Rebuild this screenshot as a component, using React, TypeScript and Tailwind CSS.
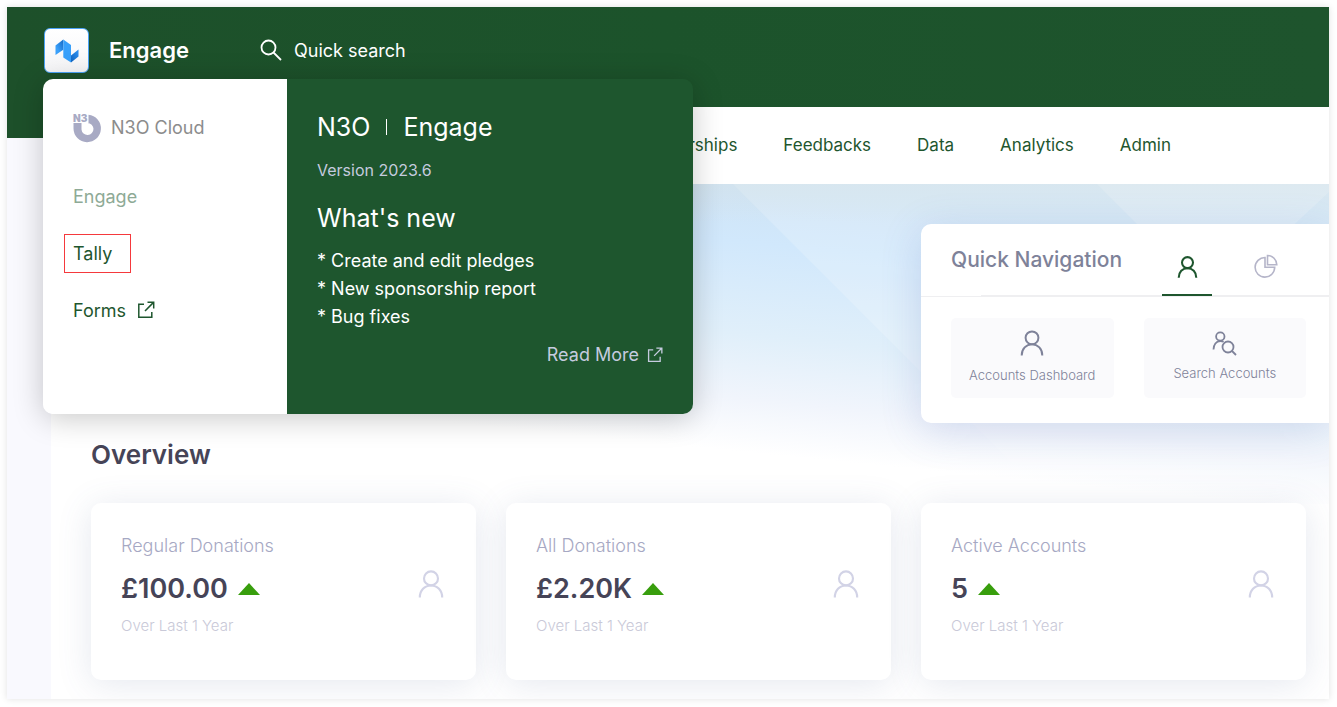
import React from "react";

function PersonIcon({ className, weight = 2 }: { className?: string; weight?: number }) {
  return (
    <svg viewBox="0 0 28 30" fill="none" stroke="currentColor" strokeWidth={weight} className={className} aria-hidden="true">
      <circle cx="14" cy="9" r="7.5" />
      <path d="M2 29.500C2 21.800 7.200 16.600 14 16.600s12 5.200 12 12.900" />
    </svg>
  );
}

function PersonSearchIcon({ className }: { className?: string }) {
  return (
    <svg viewBox="0 0 25 25" fill="none" stroke="currentColor" strokeWidth="1.800" className={className} aria-hidden="true">
      <circle cx="8.300" cy="5.500" r="4.200" />
      <path d="M1.500 18.500c0-4.500 2.700-8.500 6.800-8.500 1.400 0 2.400.3 3.200.9" />
      <circle cx="16" cy="16" r="5.500" />
      <path d="m20 20 4 4" />
    </svg>
  );
}

function PieIcon({ className }: { className?: string }) {
  return (
    <svg viewBox="0 0 24 24" fill="none" stroke="currentColor" strokeWidth="1.600" className={className} aria-hidden="true">
      <path d="M11 3.500A9.800 9.800 0 1 0 20.700 13.300H11z" />
      <path d="M13.500 1.500v9.300h9.300a9.300 9.300 0 0 0-9.300-9.300z" />
    </svg>
  );
}

function ExternalIcon({ className }: { className?: string }) {
  return (
    <svg viewBox="0 0 18 18" fill="none" stroke="currentColor" strokeWidth="1.500" className={className} aria-hidden="true">
      <path d="M7 3.200H1.800v13h13V11" />
      <path d="M10.500 1.200h6.200v6.200M16.500 1.400 8 10" />
    </svg>
  );
}

function EngageLogo() {
  return (
    <svg viewBox="0 0 24 24" className="size-6" aria-hidden="true">
      <defs>
        <linearGradient id="logo-left" x1="0" y1="1" x2="1" y2="0">
          <stop offset="0.300" stopColor="#3aa0fa" />
          <stop offset="1" stopColor="#1469c4" />
        </linearGradient>
        <linearGradient id="logo-right" x1="0" y1="1" x2="1" y2="0">
          <stop offset="0" stopColor="#0f62bd" />
          <stop offset="0.800" stopColor="#2b8cec" />
        </linearGradient>
      </defs>
      <path d="M.5 6.500 8.300.5v10.300L.5 16z" fill="url(#logo-left)" />
      <path d="m8.300.5 7.700 5.500v17.500L8.300 18.500z" fill="#38a0fb" />
      <path d="M16 16.500 23.500 10.500v7L16 23.500z" fill="url(#logo-right)" />
    </svg>
  );
}

function CloudLogo() {
  return (
    <svg viewBox="0 0 28 28" className="size-7 overflow-visible" aria-hidden="true">
      <path d="M.5 9H8.500V15.500a6 6 0 1 0 6-6.500H15.500V.8A13.700 13.700 0 1 1 .5 14.500z" fill="#a8aac4" />
      <text x="0" y="7.500" fontFamily="Inter, sans-serif" fontSize="10" fontWeight="900" fill="#a8aac4">N3</text>
    </svg>
  );
}

const navItems = ["Sponsorships", "Feedbacks", "Data", "Analytics", "Admin"];
const stats = [
  { label: "Regular Donations", value: "£100.00" },
  { label: "All Donations", value: "£2.20K" },
  { label: "Active Accounts", value: "5" },
];
const news = ["Create and edit pledges", "New sponsorship report", "Bug fixes"];

function AppMenu() {
  return (
    <div className="absolute -left-px top-[51px] z-20 flex w-[650px] overflow-hidden rounded-[10px] shadow-[0_4px_30px_rgba(0,0,0,0.22)]">
      <div className="w-[244px] bg-white pl-[30px] pt-[35px]">
        <div className="flex items-center gap-[10px] text-[18px] leading-7 text-[#8c8c8c]">
          <CloudLogo />
          N3O Cloud
        </div>
        <nav className="mt-[35px] flex flex-col items-start gap-[18px] text-[18px] text-[#1e562e]">
          <a href="#engage" className="flex h-[39px] items-center text-[#8eaa96]">Engage</a>
          <a href="#tally" className="-ml-[9px] flex h-[39px] w-[67px] items-center border border-[#f5393d] pl-2">Tally</a>
          <a href="#forms" className="flex h-[39px] items-center gap-[11px]">
            Forms
            <ExternalIcon className="mb-0.5 size-[18px]" />
          </a>
        </nav>
      </div>
      <div className="h-[335px] flex-1 bg-[#1e562e] px-[30px] pt-7 text-white">
        <h1 className="flex items-center text-[25px] leading-10">
          N3O
          <span className="mx-4 h-4 w-px bg-white" />
          Engage
        </h1>
        <p className="mt-[11px] text-base leading-6 text-[#c5cbdf]">Version 2023.6</p>
        <h2 className="mt-4 text-[25px] leading-10">What's new</h2>
        <ul className="mt-[9px] text-[18px] leading-7">
          {news.map((item) => (
            <li key={item}>* {item}</li>
          ))}
        </ul>
        <a href="#more" className="mt-[10px] flex items-center justify-end gap-2 text-[18px] leading-7 text-[#c5cbdf]">
          Read More
          <ExternalIcon className="size-4" />
        </a>
      </div>
    </div>
  );
}

function HeroBackdrop() {
  return (
    <svg viewBox="0 0 1278 320" preserveAspectRatio="none" className="absolute inset-x-0 top-0 h-80 w-full" aria-hidden="true">
      <defs>
        <linearGradient id="sky" gradientUnits="userSpaceOnUse" x1="640" y1="0" x2="614" y2="260">
          <stop offset="0" stopColor="#cfe4f5" />
          <stop offset="0.200" stopColor="#d1e8fc" />
          <stop offset="0.550" stopColor="#e0effa" />
          <stop offset="0.800" stopColor="#f1f5fc" />
          <stop offset="1" stopColor="#ffffff" />
        </linearGradient>
        <linearGradient id="top-shade" x1="0" y1="0" x2="0" y2="1">
          <stop offset="0" stopColor="#d8e0e0" stopOpacity="0.300" />
          <stop offset="0.120" stopColor="#d8e0e0" stopOpacity="0" />
        </linearGradient>
      </defs>
      <rect width="1278" height="320" fill="url(#sky)" />
      <path d="M682 0H1278V320H1002z" fill="#fff" fillOpacity="0.180" />
      <path d="M1046 0h232v8L1162 116z" fill="#fff" fillOpacity="0.200" />
      <rect width="1278" height="320" fill="url(#top-shade)" />
    </svg>
  );
}

function QuickNavigation() {
  return (
    <section className="relative col-start-3 -mr-[23px] h-[199px] rounded-l-[10px] bg-white shadow-[0_8px_40px_rgba(82,104,180,0.2)]">
      <div className="flex h-[73px] border-b border-[#efeff1] pl-[30px]">
        <h2 className="w-[30px] whitespace-nowrap pt-[21px] text-[21px] font-medium leading-[30px] text-[#7e8299]">Quick Navigation</h2>
        <div role="tablist" className="flex flex-1 gap-[30px] border-b border-[#efeff1] pl-[166px]">
          <button role="tab" aria-selected="true" aria-label="Accounts" className="flex h-[72px] w-[80px] justify-center">
            <span className="flex h-[72px] w-[50px] items-center justify-center border-b-2 border-[#1e562e] pt-4 text-[#1e562e]">
              <PersonIcon className="h-[22px] w-[21px]" weight={2.800} />
            </span>
          </button>
          <button role="tab" aria-selected="false" aria-label="Reports" className="-ml-4 flex h-[71px] w-[50px] items-center justify-center pt-[13px] text-[#b5b5c9]">
            <PieIcon className="size-6" />
          </button>
        </div>
      </div>
      <div className="grid grid-cols-2 gap-[30px] pl-[30px] pr-[23px] pt-[21px] text-[13px] font-light text-[#7e8299]">
        <a href="#dashboard" className="flex h-20 flex-col items-center gap-[9px] rounded-[5px] bg-[#fafafc] pt-3">
          <PersonIcon className="h-[26px] w-6" weight={2.300} />
          <span className="leading-5">Accounts Dashboard</span>
        </a>
        <a href="#search-accounts" className="flex h-20 flex-col items-center gap-[7px] rounded-[5px] bg-[#fafafc] pt-[13px]">
          <PersonSearchIcon className="size-[25px]" />
          <span className="leading-5">Search Accounts</span>
        </a>
      </div>
    </section>
  );
}

export default function App() {
  return (
    <div className="min-h-screen bg-white p-[7px] pb-2 pr-2 font-['Inter','Noto_Sans',sans-serif]">
      <div className="overflow-hidden bg-white shadow-[0_0_7px_rgba(0,0,0,0.12)]">
        <header className="flex h-[100px] bg-gradient-to-r from-[#1d502a] via-[#1c532b] to-[#1e542d] pl-[37px] pt-[21px] text-white">
          <div className="relative flex h-[45px] w-[216px] items-center">
            <button aria-label="Open app menu" aria-expanded="true" className="flex size-[45px] items-center justify-center rounded-[6px] border border-[#4ba3f7] bg-gradient-to-b from-white to-[#f5f5f7]">
              <EngageLogo />
            </button>
            <span className="ml-5 pb-0.5 text-[22px] font-semibold leading-10">Engage</span>
            <AppMenu />
          </div>
          <label className="flex h-11 items-center gap-3">
            <svg viewBox="0 0 22 22" fill="none" stroke="currentColor" strokeWidth="1.800" className="size-[22px]" aria-hidden="true">
              <circle cx="8.500" cy="8.500" r="7" />
              <path d="m13.500 13.500 7.500 7.500" />
            </svg>
            <input type="search" aria-label="Quick search" placeholder="Quick search" className="w-60 bg-transparent text-[18px] outline-none placeholder:text-white" />
          </label>
        </header>
        <div className="flex">
          <aside className="w-11 bg-[#f9f9fe]">
            <div className="h-[31px] bg-[#1d502a]" />
          </aside>
          <main className="min-w-0 flex-1">
            <nav className="flex h-[77px] items-center justify-end gap-[46px] pr-[158px] text-[17px] text-[#1e562e]">
              {navItems.map((item) => (
                <a key={item} href={"#" + item.toLowerCase()}>{item}</a>
              ))}
            </nav>
            <div className="relative">
              <HeroBackdrop />
              <div className="grid grid-cols-3 gap-[30px] pb-[17px] pl-10 pr-[23px] pt-10">
                <QuickNavigation />
              </div>
            </div>
            <section className="pb-[19px] pl-10 pr-[23px]">
              <h2 className="relative text-[26px] font-semibold leading-[30px] text-[#464457]">Overview</h2>
              <div className="mt-[33px] grid grid-cols-3 gap-[30px]">
                {stats.map((stat) => (
                  <article key={stat.label} className="relative flex h-[177px] justify-between rounded-[10px] bg-white px-[30px] pt-[29px] shadow-[0_4px_34px_rgba(82,104,150,0.15)]">
                    <div>
                      <h3 className="text-[18px] font-light leading-7 text-[#a6a8c3]">{stat.label}</h3>
                      <p className="mt-[9px] flex items-center gap-[10px] text-[27px] font-semibold leading-10 text-[#464457]">
                        {stat.value}
                        <svg viewBox="0 0 22 12" className="h-3 w-[22px] fill-[#389e0d]" aria-label="Up">
                          <path d="M11 0 22 12H0z" />
                        </svg>
                      </p>
                      <p className="mt-[3px] text-[15px] font-light leading-7 text-[#c9c9d8]">Over Last 1 Year</p>
                    </div>
                    <PersonIcon className="mt-[38px] h-7 w-[30px] text-[#d2d3e6]" weight={2.300} />
                  </article>
                ))}
              </div>
            </section>
          </main>
        </div>
      </div>
    </div>
  );
}
